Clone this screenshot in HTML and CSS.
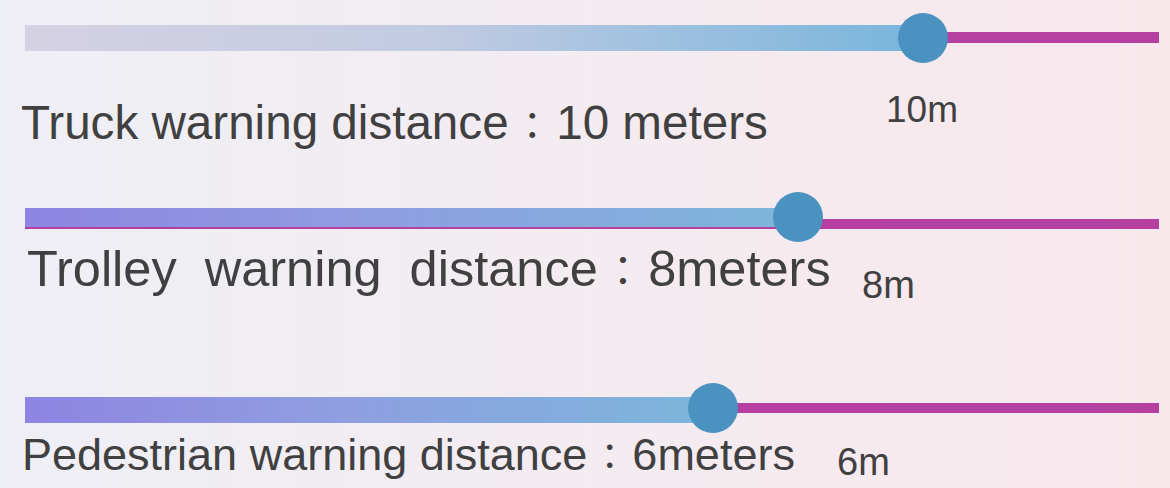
FILE: index.html
```html
<!DOCTYPE html>
<html lang="en">
<head>
<meta charset="utf-8">
<title>Warning distances</title>
<link rel="stylesheet" href="styles.css">
</head>
<body>
<main class="page">
  <section class="setting setting-truck">
    <div class="slider">
      <div class="track"></div>
      <div class="fill fill-muted" style="width: 79.2%"></div>
      <div class="thumb" style="left: 79.2%"></div>
    </div>
    <div class="label-row">
      <span class="label-main">Truck warning distance<span class="colon">：</span>10 meters</span>
      <span class="label-value">10m</span>
    </div>
  </section>

  <section class="setting setting-trolley">
    <div class="slider">
      <div class="track"></div>
      <div class="fill" style="width: 68.2%"></div>
      <div class="thumb" style="left: 68.2%"></div>
    </div>
    <div class="label-row">
      <span class="label-main">Trolley  warning  distance<span class="colon">：</span>8meters</span>
      <span class="label-value">8m</span>
    </div>
  </section>

  <section class="setting setting-pedestrian">
    <div class="slider">
      <div class="track"></div>
      <div class="fill" style="width: 60.7%"></div>
      <div class="thumb" style="left: 60.7%"></div>
    </div>
    <div class="label-row">
      <span class="label-main">Pedestrian warning distance<span class="colon">：</span>6meters</span>
      <span class="label-value">6m</span>
    </div>
  </section>
</main>
</body>
</html>
```

FILE: styles.css
```css
html, body {
  margin: 0;
  padding: 0;
}

body {
  width: 1170px;
  height: 488px;
  overflow: hidden;
  background: linear-gradient(90deg, #eeeff5 0%, #f3ecf1 50%, #f8e8ec 100%);
  font-family: "Liberation Sans", Arial, "Noto Sans CJK TC", sans-serif;
  color: #404040;
}

.page {
  display: flex;
  flex-direction: column;
}

.slider {
  display: flow-root;
  position: relative;
  margin-left: 25px;
  width: 1134px;
  height: 50px;
}

.track {
  position: absolute;
  left: 0;
  right: 0;
  height: 10px;
  background: #b63fa2;
}

.fill {
  position: relative;
  height: 26px;
  background: linear-gradient(90deg, #8e84e2 0%, #8f9ee0 45%, #7cb6db 100%);
}

.fill-muted {
  background: linear-gradient(90deg, #d5d1e3 0%, #c2cbe2 45%, #78b5dc 100%);
}

.thumb {
  position: absolute;
  top: 0;
  width: 50px;
  height: 50px;
  margin-left: -25px;
  border-radius: 50%;
  background: #4a92c0;
}

.label-row {
  display: flex;
  align-items: flex-start;
  white-space: pre;
}

.label-main {
  flex: none;
  line-height: 1;
}

.colon {
  font-family: "Noto Sans CJK TC", "Noto Sans CJK JP", sans-serif;
  font-size: 0.8em;
  padding: 0 0.125em;
  line-height: 0;
}

.label-value {
  flex: none;
  font-size: 37px;
  line-height: 1;
}

/* Truck */
.setting-truck .slider {
  margin-top: 13px;
}
.setting-truck .track {
  top: 19px;
  height: 11px;
}
.setting-truck .fill {
  margin-top: 12px;
  height: 26px;
}
.setting-truck .label-row {
  margin-top: 36px;
  padding-left: 21px;
}
.setting-truck .label-main {
  font-size: 47.6px;
  width: 865px;
}
.setting-truck .label-value {
  margin-top: -8px;
}

/* Trolley */
.setting-trolley .slider {
  margin-top: 45px;
}
.setting-trolley .track {
  top: 27px;
}
.setting-trolley .fill {
  margin-top: 16px;
  height: 19px;
}
.setting-trolley .label-row {
  margin-top: 2px;
  padding-left: 27px;
}
.setting-trolley .label-main {
  font-size: 50.5px;
  width: 835px;
}
.setting-trolley .label-value {
  font-size: 38px;
  margin-top: 22px;
  margin-bottom: -12px;
}

/* Pedestrian */
.setting-pedestrian .slider {
  margin-top: 89px;
}
.setting-pedestrian .track {
  top: 20px;
}
.setting-pedestrian .fill {
  margin-top: 14px;
  height: 26px;
}
.setting-pedestrian .label-row {
  margin-top: -1px;
  padding-left: 22px;
}
.setting-pedestrian .label-main {
  font-size: 45px;
  width: 815px;
}
.setting-pedestrian .label-value {
  font-size: 38px;
  margin-top: 11px;
  margin-bottom: -6px;
}
```
